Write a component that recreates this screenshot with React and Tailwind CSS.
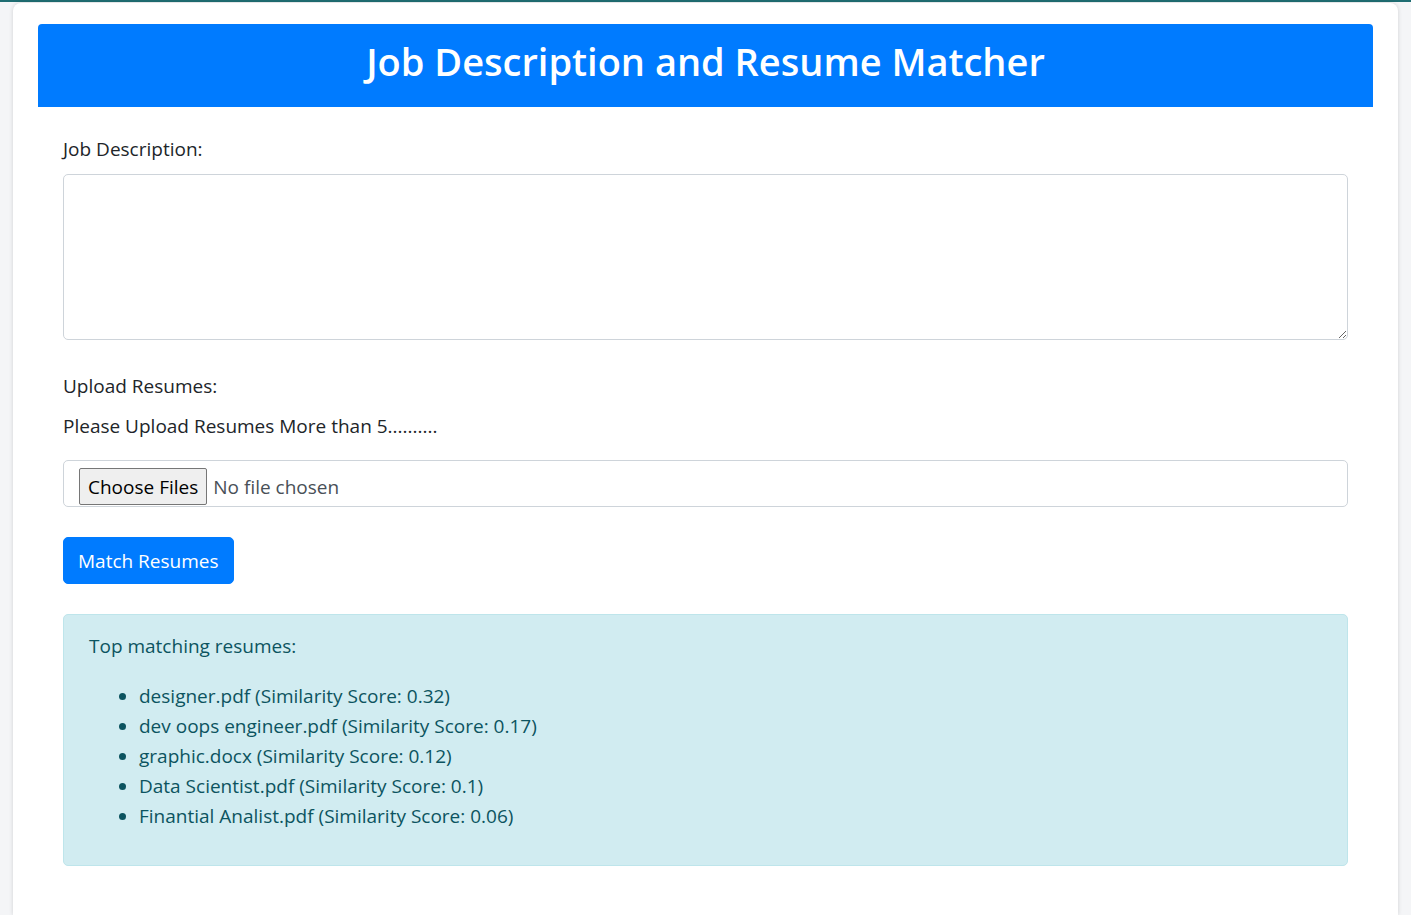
export default function App() {
  const items = [
    "designer.pdf (Similarity Score: 0.32)",
    "dev oops engineer.pdf (Similarity Score: 0.17)",
    "graphic.docx (Similarity Score: 0.12)",
    "Data Scientist.pdf (Similarity Score: 0.1)",
    "Finantial Analist.pdf (Similarity Score: 0.06)",
  ];
  return (
    <div
      className="min-h-[915px] bg-[#f4f5f7] border-t-[2px] border-[#1f6d72] text-[19px] leading-[30px] text-[#212529]"
      style={{ fontFamily: '"Open Sans", "Noto Sans", sans-serif' }}
    >
      <div className="ml-[13px] w-[1385px] mt-[1px] bg-white rounded-t-[8px] shadow-[0_0_4px_rgba(0,0,0,0.15)] px-[25px] pt-[21px] pb-[49px] min-h-[912px]">
        <div className="bg-[#007bff] rounded-t-[4px] h-[83px] flex items-center justify-center">
          <h1 className="text-white text-[38px] font-semibold leading-[48px] -mt-[10px]">
            Job Description and Resume Matcher
          </h1>
        </div>
        <div className="px-[25px] pt-[27px]">
          <label className="block mb-[10px]">Job Description:</label>
          <textarea className="block w-full h-[166px] border border-[#ced4da] rounded-[5px] resize-y"></textarea>
          <div className="h-[31px]"></div>
          <label className="block mb-[10px]">Upload Resumes:</label>
          <p className="mb-[19px]">Please Upload Resumes More than 5..........</p>
          <div className="h-[47px] border border-[#ced4da] rounded-[5px] flex items-center pl-[15px] pt-[6px]">
            <span className="h-[37px] px-[8px] bg-[#efefef] border border-[#767676] rounded-[2px] flex items-center text-black">
              Choose Files
            </span>
            <span className="ml-[6px] text-[#495057]">No file chosen</span>
          </div>
          <button className="mt-[30px] h-[47px] px-[14px] bg-[#007bff] text-white rounded-[5px] border border-[#007bff]">
            Match Resumes
          </button>
          <div className="mt-[30px] bg-[#d1ecf1] border border-[#bee5eb] rounded-[5px] px-[25px] py-[15px] text-[#0c5460]">
            <p className="mb-[20px] pt-[1px]">Top matching resumes:</p>
            <ul className="list-disc pl-[50px] mb-[19px]">
              {items.map((t) => (
                <li key={t}>{t}</li>
              ))}
            </ul>
          </div>
        </div>
      </div>
    </div>
  );
}
